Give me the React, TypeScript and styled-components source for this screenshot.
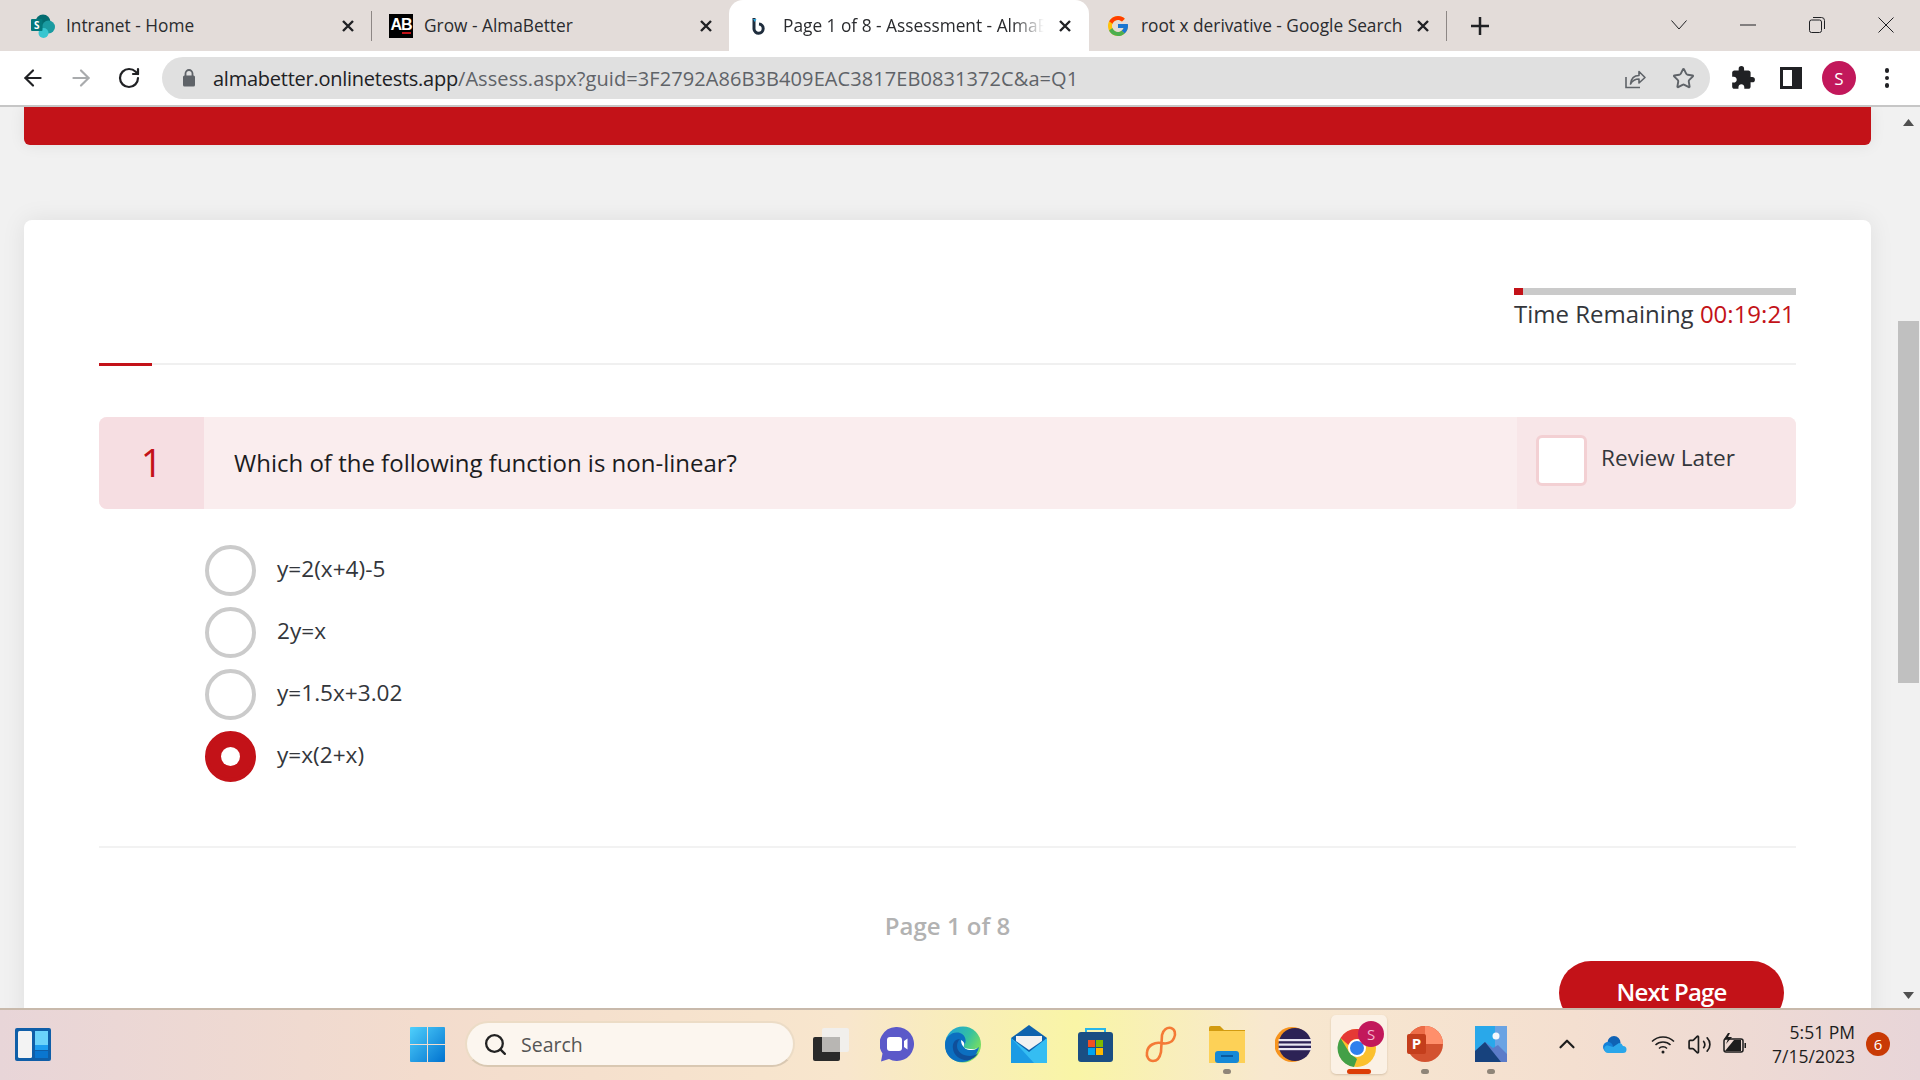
import React from "react";
import styled, { createGlobalStyle } from "styled-components";
import { ArrowLeft, ArrowRight, RotateCw, Star, Search as SearchIcon, ChevronUp, Volume2 } from "lucide-react";
import { MdExtension } from "react-icons/md";
import { FcGoogle } from "react-icons/fc";

const RED = "#c31218";
const UI_FONT = `"Open Sans", "Noto Sans", sans-serif`;

const GlobalStyle = createGlobalStyle`
  html, body {
    margin: 0;
    height: 100%;
    overflow: hidden;
    font-family: ${UI_FONT};
  }
  #root {
    height: 100%;
  }
`;

const Screen = styled.div`
  display: flex;
  flex-direction: column;
  height: 1080px;
  background: #f1f1f1;
`;

/* browser tabs */
const TabStrip = styled.div`
  display: flex;
  align-items: center;
  flex: none;
  height: 51px;
  padding-left: 14px;
  background: #e3dcd9;
`;

const Tab = styled.div<{ $active?: boolean }>`
  display: flex;
  align-items: center;
  gap: ${(p) => (p.$active ? "14px" : "11px")};
  flex: none;
  box-sizing: border-box;
  width: ${(p) => (p.$active ? "360px" : "357px")};
  height: 51px;
  padding: ${(p) => (p.$active ? "0 17px 0 16px" : "0 16px 0 17px")};
  background: ${(p) => (p.$active ? "#fff" : "transparent")};
  border-radius: ${(p) => (p.$active ? "14px 14px 0 0" : "0")};
`;

const TabIcon = styled.span`
  display: flex;
  justify-content: center;
  flex: none;
  width: 24px;
`;

const TabTitle = styled.span<{ $fade?: boolean }>`
  flex: 1;
  overflow: hidden;
  white-space: nowrap;
  font-size: 17.3px;
  color: #2a2b2e;
  ${(p) => p.$fade && "mask-image: linear-gradient(90deg, #000 88%, transparent 100%);"}
`;

const TabClose = styled.svg`
  flex: none;
  width: 14px;
  height: 14px;
  stroke: #202124;
  stroke-width: 2.4;
`;

const Separator = styled.span`
  flex: none;
  width: 1px;
  height: 30px;
  background: #8d8785;
`;

const ABLogo = styled.span`
  display: block;
  position: relative;
  width: 24px;
  height: 24px;
  background: #000;
  color: #fff;
  font: 700 16px/22px "Liberation Sans", sans-serif;
  letter-spacing: -1px;
  text-align: center;
  &::after {
    content: "";
    position: absolute;
    right: 2px;
    bottom: 4px;
    width: 9px;
    height: 2px;
    background: ${RED};
  }
`;

const NewTab = styled.span`
  display: flex;
  margin-left: 24px;
`;

const WindowControls = styled.div`
  display: flex;
  margin-left: auto;
`;

const WindowButton = styled.span`
  display: flex;
  align-items: center;
  justify-content: center;
  width: 69px;
  height: 42px;
  margin-bottom: 1px;
  svg {
    fill: none;
    stroke: #202124;
    stroke-width: 1;
  }
`;

/* address bar row */
const Toolbar = styled.div`
  display: flex;
  align-items: center;
  flex: none;
  box-sizing: border-box;
  height: 56px;
  padding: 0 9px;
  background: #fff;
  border-bottom: 2px solid #c6c6c6;
`;

const ToolButton = styled.span<{ $dim?: boolean }>`
  display: flex;
  align-items: center;
  justify-content: center;
  flex: none;
  width: 48px;
  color: ${(p) => (p.$dim ? "#a9abad" : "#202124")};
`;

const AddressBar = styled.div`
  display: flex;
  align-items: center;
  flex: 1;
  height: 42px;
  margin: 0 9px;
  padding: 0 3px 0 19px;
  background: #e0e0e0;
  border-radius: 21px;
`;

const Url = styled.div`
  flex: 1;
  margin-left: 16px;
  font-size: 20px;
  letter-spacing: 0.08px;
  color: #5f6368;
  white-space: nowrap;
  b {
    font-weight: 400;
    letter-spacing: -0.25px;
    color: #202124;
  }
`;

const Avatar = styled.span`
  display: flex;
  align-items: center;
  justify-content: center;
  width: 34px;
  height: 34px;
  border-radius: 50%;
  background: #c2185b;
  color: #fff;
  font-size: 17px;
`;

const Dots = styled.span`
  display: flex;
  flex-direction: column;
  gap: 3px;
  i {
    width: 4.5px;
    height: 4.5px;
    border-radius: 50%;
    background: #202124;
  }
`;

/* web page area */
const Viewport = styled.div`
  display: flex;
  flex: 1;
  min-height: 0;
  overflow: hidden;
`;

const Page = styled.main`
  flex: 1;
  box-sizing: border-box;
  padding: 0 26px 0 24px;
  min-width: 0;
`;

const Banner = styled.div`
  height: 38px;
  background: ${RED};
  border-radius: 0 0 6px 6px;
  box-shadow: 0 0 16px rgba(0, 0, 0, 0.08);
`;

const Card = styled.section`
  margin-top: 75px;
  padding: 68px 75px 0;
  background: #fff;
  border-radius: 8px;
  box-shadow: 0 0 24px rgba(0, 0, 0, 0.08);
`;

const TimerBlock = styled.div`
  width: 282px;
  margin-left: auto;
`;

const TimerTrack = styled.div`
  height: 7px;
  background: #cacaca;
`;

const TimerFill = styled.div`
  height: 100%;
  background: ${RED};
`;

const TimerText = styled.div`
  margin-top: 2px;
  font-size: 24px;
  line-height: 33px;
  color: #33363b;
  white-space: nowrap;
  span {
    color: ${RED};
  }
`;

const Rule = styled.div`
  height: 2px;
  margin-top: 33px;
  background: #f0f0f0;
  &::before {
    content: "";
    display: block;
    width: 53px;
    height: 3px;
    background: ${RED};
  }
`;

const QuestionBar = styled.div`
  display: flex;
  align-items: stretch;
  height: 92px;
  margin-top: 52px;
  background: #faedee;
  border-radius: 8px;
  overflow: hidden;
`;

const QuestionNumber = styled.div`
  display: flex;
  align-items: center;
  justify-content: center;
  width: 105px;
  padding-bottom: 2px;
  background: #f6dee2;
  color: ${RED};
  font-size: 38px;
  font-weight: 500;
`;

const QuestionText = styled.div`
  display: flex;
  align-items: center;
  flex: 1;
  padding: 0 0 2px 30px;
  font-size: 24px;
  color: #1c1c1e;
`;

const ReviewCell = styled.div`
  display: flex;
  align-items: flex-start;
  gap: 14px;
  width: 279px;
  box-sizing: border-box;
  padding: 18px 0 0 19px;
  background: #f8e6e8;
`;

const ReviewBox = styled.span`
  box-sizing: border-box;
  width: 51px;
  height: 51px;
  background: #fff;
  border: 3px solid #f3d0d3;
  border-radius: 6px;
`;

const ReviewLabel = styled.span`
  font-size: 22.6px;
  line-height: 46px;
  color: #33363b;
`;

const Options = styled.div`
  display: flex;
  flex-direction: column;
  gap: 11px;
  margin-top: 36px;
  padding-left: 106px;
`;

const Option = styled.label`
  display: flex;
  align-items: center;
  gap: 21px;
`;

const Radio = styled.span<{ $checked?: boolean }>`
  display: flex;
  align-items: center;
  justify-content: center;
  box-sizing: border-box;
  width: 51px;
  height: 51px;
  border-radius: 50%;
  border: 4px solid ${(p) => (p.$checked ? RED : "#cbcbcb")};
  background: ${(p) => (p.$checked ? RED : "#fff")};
  &::after {
    content: "";
    display: ${(p) => (p.$checked ? "block" : "none")};
    width: 19px;
    height: 19px;
    border-radius: 50%;
    background: #fff;
  }
`;

const OptionText = styled.span`
  margin-top: -4px;
  font-size: 22.6px;
  color: #33363b;
`;

const BottomRule = styled.div`
  height: 2px;
  margin-top: 64px;
  background: #f2f2f2;
`;

const PageLabel = styled.div`
  margin-top: 61px;
  text-align: center;
  font-size: 24px;
  line-height: 33px;
  font-weight: 600;
  color: #b2b2b2;
`;

const Actions = styled.div`
  display: flex;
  justify-content: flex-end;
  margin-top: 19px;
  padding-right: 12px;
`;

const NextButton = styled.button`
  width: 225px;
  height: 64px;
  padding: 0 0 4px;
  border: none;
  border-radius: 32px;
  background: ${RED};
  color: #fff;
  font-family: ${UI_FONT};
  font-size: 24px;
  font-weight: 600;
  letter-spacing: -0.8px;
`;

const Scrollbar = styled.div`
  display: flex;
  flex-direction: column;
  align-items: center;
  flex: none;
  width: 23px;
  background: #f1f1f1;
`;

const ScrollArrow = styled.svg<{ $down?: boolean }>`
  flex: none;
  width: 11px;
  height: 7px;
  margin-top: ${(p) => (p.$down ? "309px" : "12px")};
  fill: #505050;
  transform: ${(p) => (p.$down ? "rotate(180deg)" : "none")};
`;

const ScrollThumb = styled.div`
  flex: none;
  width: 21px;
  height: 362px;
  margin-top: 195px;
  background: #c0c0c0;
`;

/* windows taskbar */
const Taskbar = styled.footer`
  display: flex;
  align-items: center;
  flex: none;
  box-sizing: border-box;
  height: 72px;
  padding: 0 30px 2px 15px;
  border-top: 2px solid #c8b9ab;
  background: linear-gradient(
    90deg,
    #e8d5d8 0%,
    #f3dccd 22%,
    #f8e6cd 44%,
    #f9f5a6 56%,
    #f8e8cf 66%,
    #f4dfd0 82%,
    #e8d5d8 100%
  );
`;

const TaskApps = styled.div`
  display: flex;
  align-items: center;
  margin-left: 343px;
`;

const TaskSlot = styled.span<{ $active?: boolean; $running?: boolean }>`
  display: flex;
  align-items: center;
  justify-content: center;
  position: relative;
  flex: none;
  width: 66px;
  height: 59px;
  &::before {
    content: "";
    display: ${(p) => (p.$active ? "block" : "none")};
    position: absolute;
    left: 5px;
    right: 5px;
    top: 0;
    bottom: 0;
    background: #fbf1e5;
    border-radius: 5px;
    box-shadow: 0 1px 2px rgba(120, 90, 60, 0.25);
  }
  &::after {
    content: "";
    display: ${(p) => (p.$active || p.$running ? "block" : "none")};
    position: absolute;
    bottom: 0;
    left: 50%;
    transform: translateX(-50%);
    width: ${(p) => (p.$active ? "24px" : "8px")};
    height: 5px;
    border-radius: 3px;
    background: ${(p) => (p.$active ? "#dc3d05" : "#8f8578")};
  }
  svg {
    position: relative;
  }
`;

const SearchBox = styled.div`
  display: flex;
  align-items: center;
  gap: 13px;
  flex: none;
  box-sizing: border-box;
  width: 330px;
  height: 46px;
  margin: 0 3px 0 5px;
  padding-left: 16px;
  background: #fcf6ef;
  border: 2px solid #ecdcc6;
  border-bottom-color: #d9c8b2;
  border-radius: 23px;
  font-size: 19.5px;
  color: #555;
`;

const Tray = styled.div`
  display: flex;
  align-items: center;
  margin-left: auto;
`;

const TrayIcon = styled.span<{ $gap?: boolean }>`
  display: flex;
  align-items: center;
  justify-content: center;
  flex: none;
  width: 36px;
  margin-left: ${(p) => (p.$gap ? "12px" : "0")};
  color: #1d1d1d;
`;

const Clock = styled.div`
  width: 102px;
  text-align: right;
  font-size: 17.5px;
  line-height: 24px;
  color: #1d1d1d;
  white-space: nowrap;
`;

const NotifyBadge = styled.span`
  display: flex;
  align-items: center;
  justify-content: center;
  width: 24px;
  height: 24px;
  margin-left: 11px;
  border-radius: 50%;
  background: #c93a05;
  color: #fff;
  font-size: 15px;
`;

const SharePointIcon = () => (
  <svg width="24" height="24" viewBox="0 0 24 24">
    <circle cx="12" cy="8" r="7.5" fill="#036c70" />
    <circle cx="17.5" cy="13" r="6.5" fill="#1a9ba1" />
    <circle cx="12.5" cy="19" r="5" fill="#37c6d0" />
    <rect x="0" y="5" width="11.5" height="12" rx="1" fill="#03787c" />
    <text x="5.7" y="14.7" fontSize="10" fontWeight="700" fill="#fff" textAnchor="middle" fontFamily="Open Sans">
      S
    </text>
  </svg>
);

const LoadingIcon = () => (
  <svg width="24" height="24" viewBox="0 0 24 24" fill="none">
    <path d="M9 4v11a4.6 4.6 0 1 0 5-5" stroke="#1f2d3d" strokeWidth="3" />
    <path d="M8 5h3.5l-1.7 3z" fill="#2aa7e0" />
  </svg>
);

const CloseX = () => (
  <TabClose viewBox="0 0 14 14">
    <path d="M2 2l10 10M12 2L2 12" />
  </TabClose>
);

const ShareIcon = () => (
  <svg width="24" height="24" viewBox="0 0 24 24" fill="none" stroke="#5f6368" strokeWidth="1.6">
    <path d="M3 11v10.5h14" />
    <path d="M7.5 18c.6-5.5 4-8.5 8.5-8.5V5.5l6 6-6 5.5v-4c-3.5 0-6.5 1.5-8.5 5z" strokeLinejoin="round" />
  </svg>
);

const LockIcon = () => (
  <svg width="16" height="20" viewBox="0 0 16 20">
    <path d="M4.5 8V5.5a3.5 3.5 0 0 1 7 0V8" fill="none" stroke="#5f6368" strokeWidth="1.8" />
    <rect x="2" y="7.5" width="12" height="11" rx="1.5" fill="#5f6368" />
  </svg>
);

const SidePanelIcon = () => (
  <svg width="22" height="22" viewBox="0 0 22 22">
    <path d="M0 0h22v22H0z" fill="#202124" />
    <path d="M3 3h9v16H3z" fill="#fff" />
  </svg>
);

const WidgetsIcon = () => (
  <svg width="36" height="33" viewBox="0 0 36 33" style={{ flex: "none" }}>
    <rect width="36" height="33" rx="2" fill="#0f5ea8" />
    <rect x="3" y="3" width="14" height="27" rx="1.5" fill="#f3f3f3" />
    <rect x="20" y="3" width="13" height="14" fill="#6bd3fb" />
    <rect x="20" y="17" width="13" height="5" fill="#1c9df0" />
    <rect x="20" y="23" width="13" height="7" fill="#0a76d0" />
  </svg>
);

const StartIcon = () => (
  <svg width="35" height="35" viewBox="0 0 35 35">
    <defs>
      <linearGradient id="startGrad" x1="0" y1="0" x2="1" y2="1">
        <stop offset="0" stopColor="#4fd0fc" />
        <stop offset="1" stopColor="#0172cf" />
      </linearGradient>
    </defs>
    <path d="M1 0h16v17H0V1a1 1 0 0 1 1-1zM18 0h16a1 1 0 0 1 1 1v16H18zM0 18h17v17H1a1 1 0 0 1-1-1zM18 18h17v16a1 1 0 0 1-1 1H18z" fill="url(#startGrad)" />
  </svg>
);

const TaskViewIcon = () => (
  <svg width="36" height="33" viewBox="0 0 36 33">
    <rect x="0" y="9" width="27" height="24" rx="2" fill="#2a2a2a" />
    <rect x="9" y="0" width="27" height="24" rx="2" fill="#f1efec" />
    <rect x="9" y="9" width="18" height="15" fill="#b8b6b3" />
  </svg>
);

const ChatIcon = () => (
  <svg width="34" height="35" viewBox="0 0 34 35">
    <path d="M17 0a17 17 0 1 1-8 32l-8 2.5 1.5-8A17 17 0 0 1 17 0z" fill="#5b59c9" />
    <rect x="7" y="10" width="15" height="14" rx="3" fill="#fff" />
    <path d="M24 14l3.5-2.5v11L24 20z" fill="#fff" />
  </svg>
);

const EdgeIcon = () => (
  <svg width="36" height="37" viewBox="0 0 36 37">
    <defs>
      <linearGradient id="edgeGrad" x1="0" y1="0" x2="1" y2="0.6">
        <stop offset="0" stopColor="#1b9de2" />
        <stop offset="0.6" stopColor="#35c1a0" />
        <stop offset="1" stopColor="#7fe05a" />
      </linearGradient>
    </defs>
    <circle cx="18" cy="18.5" r="18" fill="url(#edgeGrad)" />
    <path d="M0 19C0 10 8 5 15 7c6 2 7 9 4 12-2 2 2 5 7 5 3 0 6-1 8-3-2 9-9 15-17 15C7 36 0 29 0 19z" fill="#0c6fc0" />
    <path d="M15 13c-5 0-8 4-7 10 1 7 8 12 16 11 3-1 7-3 9-7-2 2-5 3-8 3-7 0-13-4-13-10 0-3 1-5 3-7z" fill="#0f4f9a" />
    <path d="M16 14c2 1 4 3 3 5-1 3 3 5 7 5 3 0 5-1 7-2-2 1-5 1-8 1-5 0-9-3-9-9z" fill="#fff" />
  </svg>
);

const MailIcon = () => (
  <svg width="36" height="38" viewBox="0 0 36 38">
    <path d="M0 13L18 0l18 13v25H0z" fill="#0e63ae" />
    <path d="M5 11h26v5L18 25 5 16z" fill="#f2f2f2" />
    <path d="M0 13l18 14 18-14v25H0z" fill="#35bdf2" />
    <path d="M0 13l23 25H0z" fill="#1b9be4" />
  </svg>
);

const StoreIcon = () => (
  <svg width="35" height="36" viewBox="0 0 35 36">
    <path d="M8 8V3h19v5" fill="none" stroke="#27b6ea" strokeWidth="2" />
    <rect y="6" width="35" height="30" rx="3" fill="#1a4e83" />
    <rect x="10" y="14" width="7" height="7" fill="#f25022" />
    <rect x="18" y="14" width="7" height="7" fill="#7fba00" />
    <rect x="10" y="22" width="7" height="7" fill="#00a4ef" />
    <rect x="18" y="22" width="7" height="7" fill="#ffb900" />
  </svg>
);

const LinkIcon = () => (
  <svg width="34" height="38" viewBox="0 0 34 38" fill="none" stroke="#f47a36" strokeWidth="2.6">
    <path d="M18 10c1-5 5-8 9-7 4 1 5 6 3 10-2 5-8 6-13 5-6-1-13 2-14 9-1 5 2 9 6 9 5 0 7-4 8-9z" />
  </svg>
);

const FolderIcon = () => (
  <svg width="36" height="37" viewBox="0 0 36 37">
    <path d="M0 2a2 2 0 0 1 2-2h9l4 4h21v6H0z" fill="#d29b10" />
    <path d="M0 5h36v32H0z" fill="#fdd157" />
    <rect x="6" y="25" width="24" height="12" rx="3" fill="#1689d6" />
    <rect x="12" y="29" width="12" height="2" fill="#0a5a9e" />
  </svg>
);

const EclipseIcon = () => (
  <svg width="36" height="37" viewBox="0 0 36 37">
    <circle cx="17" cy="18.5" r="17.5" fill="#f7941e" />
    <circle cx="20" cy="18.5" r="16.5" fill="#2c2255" />
    <rect x="3.5" y="13" width="33" height="2.2" fill="#e9e6f2" />
    <rect x="3.5" y="17.5" width="33" height="2.2" fill="#e9e6f2" />
    <rect x="3.5" y="22" width="33" height="2.2" fill="#e9e6f2" />
  </svg>
);

const ChromeIcon = () => (
  <svg width="56" height="50" viewBox="0 0 56 50">
    <circle cx="26" cy="29" r="19" fill="#fbc02d" />
    <path d="M26 10a19 19 0 0 1 17 10H26a9 9 0 0 0-8.5 6L9.5 19A19 19 0 0 1 26 10z" fill="#e53935" />
    <path d="M9.5 19l8.5 14 8 7-3 8A19 19 0 0 1 9.5 19z" fill="#43a047" />
    <circle cx="26" cy="29" r="9" fill="#fff" />
    <circle cx="26" cy="29" r="7" fill="#2f80ed" />
    <circle cx="40" cy="15" r="13" fill="#c2185b" />
    <text x="40" y="20.5" fontSize="15" textAnchor="middle" fill="#f3b6cf" fontFamily="Open Sans">
      S
    </text>
  </svg>
);

const PowerPointIcon = () => (
  <svg width="36" height="38" viewBox="0 0 36 38">
    <circle cx="18" cy="19" r="18" fill="#d35230" />
    <path d="M18 1a18 18 0 0 1 18 18H18z" fill="#ff8f6b" />
    <path d="M18 1v18H0A18 18 0 0 1 18 1z" fill="#ed6c47" />
    <rect x="0" y="9" width="19" height="20" rx="2" fill="#c43e1c" />
    <text x="9.5" y="24" fontSize="15" fontWeight="700" textAnchor="middle" fill="#fff" fontFamily="Open Sans">
      P
    </text>
  </svg>
);

const PhotosIcon = () => (
  <svg width="32" height="36" viewBox="0 0 32 36">
    <rect width="32" height="36" fill="#29a8ea" />
    <path d="M20 0h12v36H20z" fill="#6aa3e3" />
    <circle cx="21" cy="10" r="3.5" fill="#f4f8fc" />
    <path d="M0 25l10-9 8 6 5-3 9 9v8H0z" fill="#5b7cc9" />
    <path d="M0 25l10-9 16 20H0z" fill="#17427d" />
  </svg>
);

const OneDriveIcon = () => (
  <svg width="24" height="17" viewBox="0 0 24 17">
    <ellipse cx="11" cy="6.5" rx="6.5" ry="6.5" fill="#0f62b5" />
    <ellipse cx="5" cy="11" rx="5" ry="5" fill="#1480d8" />
    <path d="M5 17a4 4 0 0 1-1-7.8L10 11l6-4a4.5 4.5 0 0 1 4 3 3.5 3.5 0 0 1 0 7z" fill="#2aa6ea" />
  </svg>
);

const WifiIcon = () => (
  <svg width="24" height="20" viewBox="0 0 24 20" fill="none" stroke="#1d1d1d" strokeWidth="1.5">
    <path d="M1 7.5c6-6 16-6 22 0M4.5 11c4-4 11-4 15 0M8 14.5c2.2-2.2 5.8-2.2 8 0" />
    <circle cx="12" cy="18" r="1.5" fill="#1d1d1d" stroke="none" />
  </svg>
);

const BatteryIcon = () => (
  <svg width="24" height="22" viewBox="0 0 24 22" fill="none" stroke="#1d1d1d" strokeWidth="1.5">
    <rect x="1" y="6" width="19" height="13" rx="2" />
    <path d="M2 18l9-11h7v11z" fill="#1d1d1d" stroke="none" />
    <path d="M21.5 10h1.5v5h-1.5z" fill="#1d1d1d" stroke="none" />
    <path d="M5 0L1 6h4l-2 5 6-7H5l2-4z" fill="#1d1d1d" stroke="none" />
  </svg>
);

const options = [
  { label: "y=2(x+4)-5" },
  { label: "2y=x" },
  { label: "y=1.5x+3.02" },
  { label: "y=x(2+x)", checked: true },
];

export default function App() {
  return (
    <Screen>
      <GlobalStyle />
      <TabStrip>
        <Tab>
          <TabIcon>
            <SharePointIcon />
          </TabIcon>
          <TabTitle>Intranet - Home</TabTitle>
          <CloseX />
        </Tab>
        <Separator />
        <Tab>
          <TabIcon>
            <ABLogo>AB</ABLogo>
          </TabIcon>
          <TabTitle>Grow - AlmaBetter</TabTitle>
          <CloseX />
        </Tab>
        <Tab $active>
          <TabIcon>
            <LoadingIcon />
          </TabIcon>
          <TabTitle $fade>Page 1 of 8 - Assessment - AlmaBetter</TabTitle>
          <CloseX />
        </Tab>
        <Tab>
          <TabIcon>
            <FcGoogle size={24} />
          </TabIcon>
          <TabTitle>root x derivative - Google Search</TabTitle>
          <CloseX />
        </Tab>
        <Separator />
        <NewTab>
          <svg width="18" height="18" viewBox="0 0 18 18" stroke="#202124" strokeWidth="2.5">
            <path d="M9 0v18M0 9h18" />
          </svg>
        </NewTab>
        <WindowControls>
          <WindowButton>
            <svg width="16" height="10" viewBox="0 0 16 10">
              <path d="M.5.5L8 9 15.5.5" />
            </svg>
          </WindowButton>
          <WindowButton>
            <svg width="16" height="2" viewBox="0 0 16 2">
              <path d="M0 1h16" />
            </svg>
          </WindowButton>
          <WindowButton>
            <svg width="16" height="16" viewBox="0 0 16 16">
              <rect x=".5" y="3" width="12" height="12.5" rx="2" />
              <path d="M4 .5h8.5a3 3 0 0 1 3 3V12" />
            </svg>
          </WindowButton>
          <WindowButton>
            <svg width="16" height="16" viewBox="0 0 16 16">
              <path d="M.5.5l15 15M15.5.5l-15 15" />
            </svg>
          </WindowButton>
        </WindowControls>
      </TabStrip>

      <Toolbar>
        <ToolButton>
          <ArrowLeft size={26} strokeWidth={2} />
        </ToolButton>
        <ToolButton $dim>
          <ArrowRight size={26} strokeWidth={2} />
        </ToolButton>
        <ToolButton>
          <RotateCw size={24} strokeWidth={2.2} />
        </ToolButton>
        <AddressBar>
          <LockIcon />
          <Url>
            <b>almabetter.onlinetests.app</b>/Assess.aspx?guid=3F2792A86B3B409EAC3817EB0831372C&amp;a=Q1
          </Url>
          <ToolButton>
            <ShareIcon />
          </ToolButton>
          <ToolButton>
            <Star size={23} strokeWidth={2} color="#5f6368" />
          </ToolButton>
        </AddressBar>
        <ToolButton>
          <MdExtension size={26} />
        </ToolButton>
        <ToolButton>
          <SidePanelIcon />
        </ToolButton>
        <ToolButton>
          <Avatar>S</Avatar>
        </ToolButton>
        <ToolButton>
          <Dots>
            <i />
            <i />
            <i />
          </Dots>
        </ToolButton>
      </Toolbar>

      <Viewport>
        <Page>
          <Banner />
          <Card>
            <TimerBlock>
              <TimerTrack>
                <TimerFill style={{ width: `${(9 / 282) * 100}%` }} />
              </TimerTrack>
              <TimerText>
                Time Remaining <span>00:19:21</span>
              </TimerText>
            </TimerBlock>
            <Rule />
            <QuestionBar>
              <QuestionNumber>1</QuestionNumber>
              <QuestionText>Which of the following function is non-linear?</QuestionText>
              <ReviewCell>
                <ReviewBox />
                <ReviewLabel>Review Later</ReviewLabel>
              </ReviewCell>
            </QuestionBar>
            <Options>
              {options.map((option) => (
                <Option key={option.label}>
                  <Radio $checked={option.checked} />
                  <OptionText>{option.label}</OptionText>
                </Option>
              ))}
            </Options>
            <BottomRule />
            <PageLabel>Page 1 of 8</PageLabel>
            <Actions>
              <NextButton>Next Page</NextButton>
            </Actions>
          </Card>
        </Page>
        <Scrollbar>
          <ScrollArrow viewBox="0 0 11 7">
            <path d="M5.5 0L11 7H0z" />
          </ScrollArrow>
          <ScrollThumb />
          <ScrollArrow $down viewBox="0 0 11 7">
            <path d="M5.5 0L11 7H0z" />
          </ScrollArrow>
        </Scrollbar>
      </Viewport>

      <Taskbar>
        <WidgetsIcon />
        <TaskApps>
          <TaskSlot>
            <StartIcon />
          </TaskSlot>
          <SearchBox>
            <SearchIcon size={25} strokeWidth={2.2} color="#222" />
            Search
          </SearchBox>
          <TaskSlot>
            <TaskViewIcon />
          </TaskSlot>
          <TaskSlot>
            <ChatIcon />
          </TaskSlot>
          <TaskSlot>
            <EdgeIcon />
          </TaskSlot>
          <TaskSlot>
            <MailIcon />
          </TaskSlot>
          <TaskSlot>
            <StoreIcon />
          </TaskSlot>
          <TaskSlot>
            <LinkIcon />
          </TaskSlot>
          <TaskSlot $running>
            <FolderIcon />
          </TaskSlot>
          <TaskSlot>
            <EclipseIcon />
          </TaskSlot>
          <TaskSlot $active>
            <ChromeIcon />
          </TaskSlot>
          <TaskSlot $running>
            <PowerPointIcon />
          </TaskSlot>
          <TaskSlot $running>
            <PhotosIcon />
          </TaskSlot>
        </TaskApps>
        <Tray>
          <TrayIcon>
            <ChevronUp size={26} strokeWidth={2} />
          </TrayIcon>
          <TrayIcon $gap>
            <OneDriveIcon />
          </TrayIcon>
          <TrayIcon $gap>
            <WifiIcon />
          </TrayIcon>
          <TrayIcon>
            <Volume2 size={25} strokeWidth={1.6} />
          </TrayIcon>
          <TrayIcon>
            <BatteryIcon />
          </TrayIcon>
          <Clock>
            5:51 PM
            <br />
            7/15/2023
          </Clock>
          <NotifyBadge>6</NotifyBadge>
        </Tray>
      </Taskbar>
    </Screen>
  );
}
